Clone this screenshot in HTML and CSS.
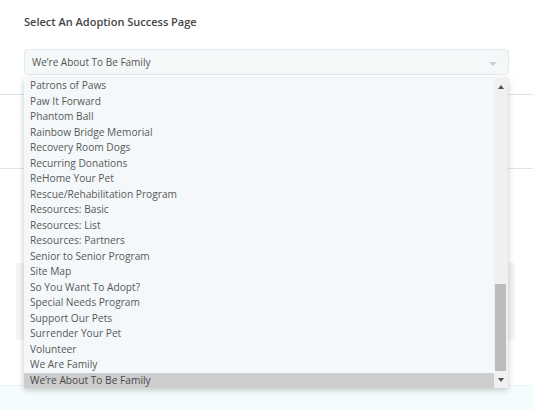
FILE: index.html
```html
<!DOCTYPE html>
<html lang="en">
<head>
<meta charset="utf-8">
<title>Select An Adoption Success Page</title>
<link rel="stylesheet" href="styles.css">
</head>
<body>
<div class="page">
  <section class="field">
    <h2 class="field-title">Select An Adoption Success Page</h2>
    <div class="select">
      <span class="select-value">We’re About To Be Family</span>
      <span class="select-caret"></span>
    </div>
  </section>
  <div class="row"></div>
  <div class="spacer"></div>
  <div class="card"></div>
  <footer class="footer"></footer>

  <div class="dropdown">
    <ul class="options">
      <li>Patrons of Paws</li>
      <li>Paw It Forward</li>
      <li>Phantom Ball</li>
      <li>Rainbow Bridge Memorial</li>
      <li>Recovery Room Dogs</li>
      <li>Recurring Donations</li>
      <li>ReHome Your Pet</li>
      <li>Rescue/Rehabilitation Program</li>
      <li>Resources: Basic</li>
      <li>Resources: List</li>
      <li>Resources: Partners</li>
      <li>Senior to Senior Program</li>
      <li>Site Map</li>
      <li>So You Want To Adopt?</li>
      <li>Special Needs Program</li>
      <li>Support Our Pets</li>
      <li>Surrender Your Pet</li>
      <li>Volunteer</li>
      <li>We Are Family</li>
      <li class="selected">We’re About To Be Family</li>
    </ul>
    <div class="scrollbar">
      <div class="sb-btn"><span class="tri-up"></span></div>
      <div class="sb-track"><div class="sb-thumb"></div></div>
      <div class="sb-btn"><span class="tri-down"></span></div>
    </div>
  </div>
</div>
</body>
</html>
```

FILE: styles.css
```css
* { box-sizing: border-box; }
html, body { margin: 0; padding: 0; background: #ffffff; }
body {
  font-family: "Open Sans", "Noto Sans", sans-serif;
  color: #555;
}
.page {
  position: relative;
  width: 533px;
  height: 410px;
  overflow: hidden;
  display: flex;
  flex-direction: column;
}
.field {
  padding: 14px 24px 0 24px;
  height: 95px;
  border-bottom: 1px solid #dde5ea;
}
.field-title {
  margin: 0;
  font-size: 11px;
  line-height: 16px;
  font-weight: 600;
  color: #454545;
}
.select {
  margin-top: 19px;
  height: 26px;
  border: 1px solid #e2eaee;
  border-radius: 4px;
  background: #f4f8f9;
  display: flex;
  align-items: center;
  justify-content: space-between;
  padding: 0 11px 0 7px;
}
.select-value {
  font-size: 10px;
  color: #555;
}
.select-caret {
  width: 0;
  height: 0;
  border-left: 4px solid transparent;
  border-right: 4px solid transparent;
  border-top: 4px solid #c9cfd3;
  margin-top: 3px;
}
.row {
  height: 74px;
  border-bottom: 1px solid #dde5ea;
}
.spacer { height: 94px; }
.card {
  margin: 0 18px 0 16px;
  height: 77px;
  background: #f4f4f4;
}
.footer {
  margin-top: 45px;
  flex: 1;
  background: #f5fcfd;
  border-top: 1px solid #e8f4f6;
}
.dropdown {
  position: absolute;
  left: 24px;
  top: 78px;
  width: 484px;
  height: 310px;
  background: #f4f8fa;
  box-shadow: 0 2px 6px rgba(0,0,0,0.22);
  display: flex;
}
.options {
  list-style: none;
  margin: 0;
  padding: 0;
  flex: 1;
}
.options li {
  height: 15.5px;
  line-height: 15.5px;
  padding-left: 6px;
  font-size: 10.2px;
  color: #585858;
  white-space: nowrap;
}
.options li.selected {
  background: #cdcdcd;
  color: #474747;
}
.scrollbar {
  width: 14px;
  background: #f0f0f0;
  display: flex;
  flex-direction: column;
}
.sb-btn {
  height: 17px;
  display: flex;
  align-items: center;
  justify-content: center;
}
.sb-track {
  flex: 1;
  display: flex;
  flex-direction: column;
  justify-content: flex-end;
  padding: 0 2px 0 1px;
}
.sb-thumb {
  height: 87px;
  background: #bcbcbc;
}
.tri-up {
  width: 0; height: 0;
  border-left: 3px solid transparent;
  border-right: 3px solid transparent;
  border-bottom: 4px solid #505050;
}
.tri-down {
  width: 0; height: 0;
  border-left: 3px solid transparent;
  border-right: 3px solid transparent;
  border-top: 4px solid #505050;
}
```
